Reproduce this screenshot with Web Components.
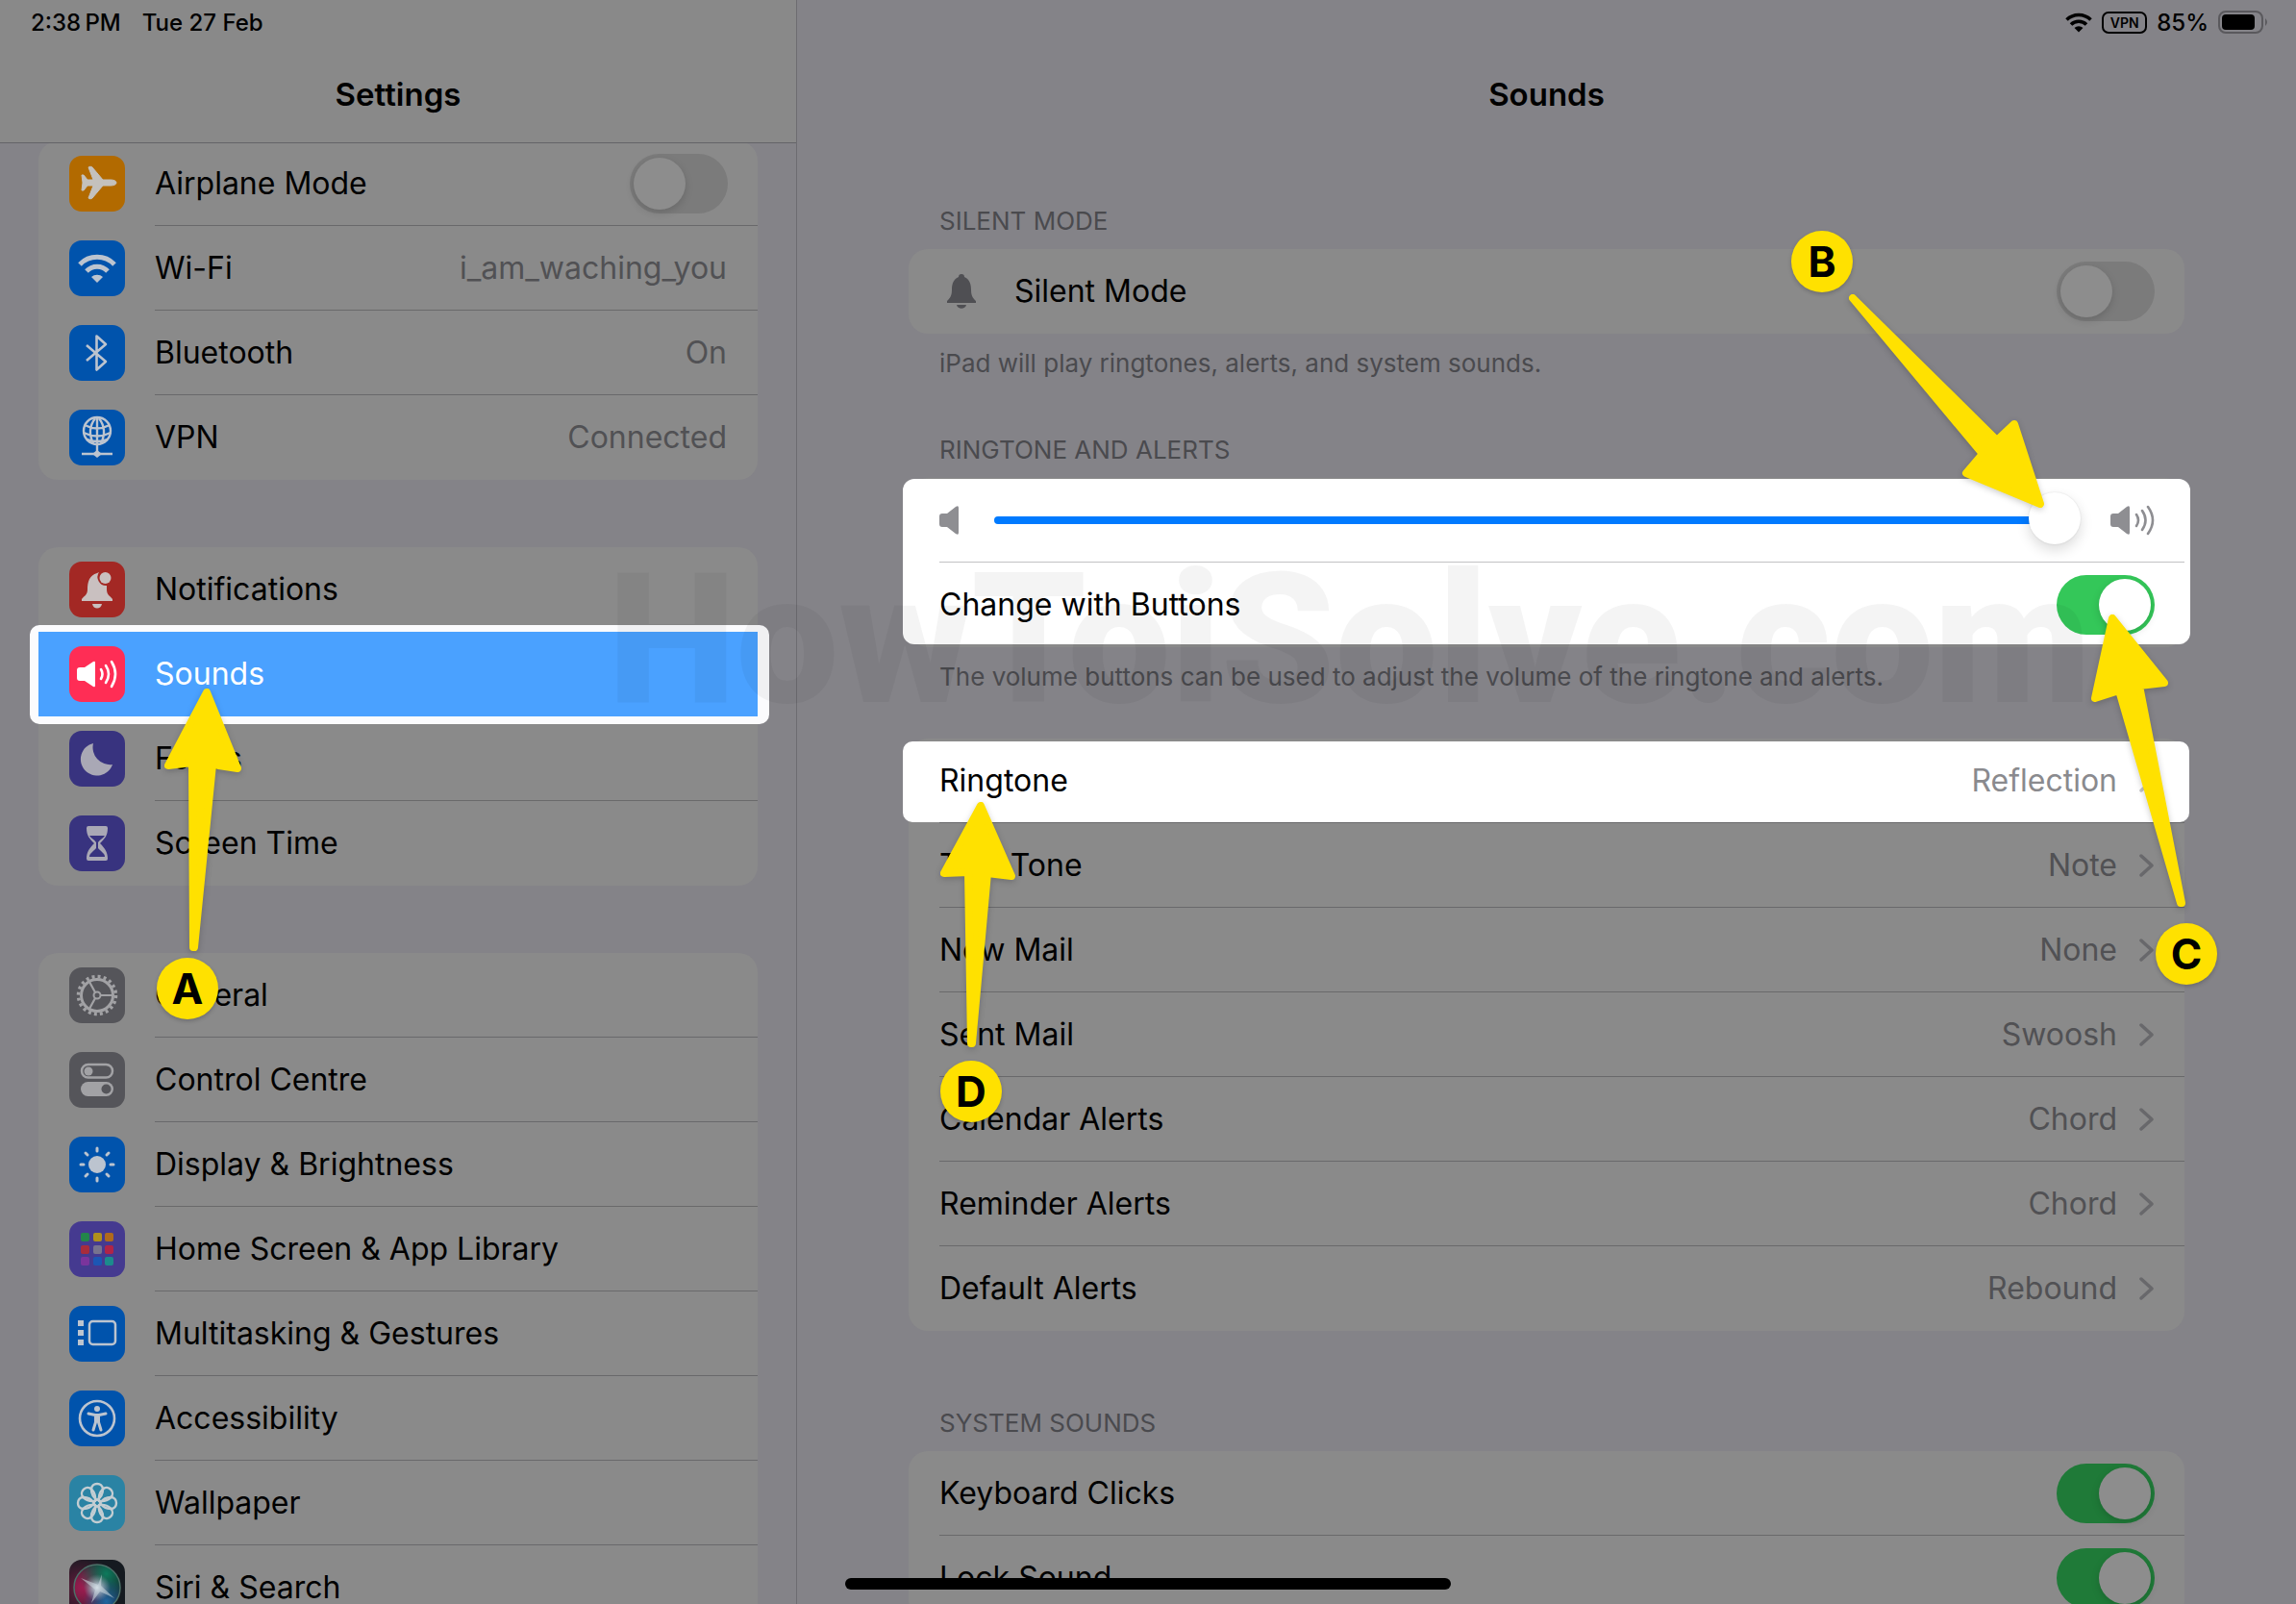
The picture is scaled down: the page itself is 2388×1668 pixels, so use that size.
<!DOCTYPE html>
<html lang="en">
<head>
<meta charset="utf-8">
<meta name="viewport" content="width=device-width, initial-scale=1">
<title>Sounds</title>
<style>
  html, body {
    margin: 0;
    height: 100%;
  }
  body {
    overflow: hidden;
    font-family: Inter, "Liberation Sans", sans-serif;
    font-size: 32px;
    color: #000;
    background: #848388;
  }
</style>
</head>
<body>
<settings-app>
  <settings-pane slot="sidebar" heading="Settings" sidebar>
    <status-time slot="status"></status-time>
    <settings-group>
      <settings-row icon="airplane" label="Airplane Mode" toggle="off"></settings-row>
      <settings-row icon="wifi" label="Wi-Fi" value="i_am_waching_you"></settings-row>
      <settings-row icon="bluetooth" label="Bluetooth" value="On"></settings-row>
      <settings-row icon="vpn" label="VPN" value="Connected"></settings-row>
    </settings-group>
    <settings-group>
      <settings-row icon="notifications" label="Notifications" plain></settings-row>
      <settings-row icon="sounds" label="Sounds" plain selected></settings-row>
      <settings-row icon="focus" label="Focus"></settings-row>
      <settings-row icon="screentime" label="Screen Time"></settings-row>
    </settings-group>
    <settings-group>
      <settings-row icon="general" label="General"></settings-row>
      <settings-row icon="control" label="Control Centre"></settings-row>
      <settings-row icon="display" label="Display &amp; Brightness"></settings-row>
      <settings-row icon="home" label="Home Screen &amp; App Library"></settings-row>
      <settings-row icon="multitask" label="Multitasking &amp; Gestures"></settings-row>
      <settings-row icon="accessibility" label="Accessibility"></settings-row>
      <settings-row icon="wallpaper" label="Wallpaper"></settings-row>
      <settings-row icon="siri" label="Siri &amp; Search"></settings-row>
    </settings-group>
  </settings-pane>

  <settings-pane slot="content" heading="Sounds">
    <status-icons slot="status"></status-icons>
    <settings-group heading="SILENT MODE" footer="iPad will play ringtones, alerts, and system sounds.">
      <settings-row icon="bell" label="Silent Mode" toggle="off"></settings-row>
    </settings-group>
    <settings-group heading="RINGTONE AND ALERTS" spotlight
      footer="The volume buttons can be used to adjust the volume of the ringtone and alerts.">
      <volume-row></volume-row>
      <settings-row label="Change with Buttons" toggle="on"></settings-row>
    </settings-group>
    <settings-group>
      <settings-row label="Ringtone" value="Reflection" chevron spotlight></settings-row>
      <settings-row label="Text Tone" value="Note" chevron></settings-row>
      <settings-row label="New Mail" value="None" chevron></settings-row>
      <settings-row label="Sent Mail" value="Swoosh" chevron></settings-row>
      <settings-row label="Calendar Alerts" value="Chord" chevron></settings-row>
      <settings-row label="Reminder Alerts" value="Chord" chevron></settings-row>
      <settings-row label="Default Alerts" value="Rebound" chevron></settings-row>
    </settings-group>
    <settings-group heading="SYSTEM SOUNDS">
      <settings-row label="Keyboard Clicks" toggle="on"></settings-row>
      <settings-row label="Lock Sound" toggle="on"></settings-row>
    </settings-group>
  </settings-pane>

  <callout-layer slot="overlay"></callout-layer>
</settings-app>

<script>
const ICONS = {
  airplane: ['#b26a00', '<path fill="#c4c1bd" stroke="#c4c1bd" stroke-linejoin="round" d="M49 28c0-2-3-3-6-3h-8L24 12c-1-1-3-1-4 0l5 13h-6l-4-5h-2l1 8-1 8h2l4-5h6l-5 13c1 1 3 1 4 0l11-13h8c3 0 6-1 6-3z"/>'],
  wifi: ['#0053ac', '<g fill="none" stroke="#bcc4cf" stroke-width="5"><path d="M11 25a25 25 0 0 1 36 0"/><path d="M18 32a15 15 0 0 1 22 0"/></g><path fill="#bcc4cf" d="M29 44l-6-6a9 9 0 0 1 12 0z"/>'],
  bluetooth: ['#0053ac', '<path fill="none" stroke="#bcc4cf" stroke-width="2.6" stroke-linejoin="round" d="M18 21l20 17-9.500 8.500v-35L38 20 18 37"/>'],
  vpn: ['#0053ac', '<g fill="none" stroke="#bcc4cf" stroke-width="2.400"><circle cx="29" cy="22" r="14"/><path d="M29 8v37M27 9q-9 12-2 26M31 9q9 12 2 26M16 16q13 7 26 0M15 24q14 7 28 0M18 31q11 4 22 0M13 46h32"/></g><path fill="#bcc4cf" d="M29 42l5 4-5 4-5-4z"/>'],
  notifications: ['#a32824', '<path fill="#c9c0c0" d="M29 12c-8 2-10 9-10 17 0 6-4 7-6 10v2h32v-2c-2-3-6-4-6-10v-4a9 9 0 0 1-8-14zM24 44h10c-1 6-9 6-10 0z"/><circle cx="37.500" cy="17" r="6" fill="#c9c0c0"/>'],
  sounds: ['#ff2d55', '<path fill="#fff" d="M8 25q0-3 3-3h5l9-6q2-1 2 1v24q0 2-2 1l-9-6h-5q-3 0-3-3z"/><g fill="none" stroke="#fff" stroke-width="2.600" stroke-linecap="round"><path d="M33 24q3 5 0 10M38 20q6 9 0 18M44 16q8 13 0 26"/></g>'],
  focus: ['#38337f', '<path fill="#a9a8b5" d="M25 13a17 17 0 1 0 20 22A18 18 0 0 1 25 13z"/>'],
  screentime: ['#38337f', '<path fill="#a9a8b5" fill-rule="evenodd" d="M20 11h18q2 0 2 2c0 8-3 11-8 16 5 5 8 9 8 16q0 2-2 2H20q-2 0-2-2c0-7 3-11 8-16-5-5-8-8-8-16q0-2 2-2zm1 10c2 3 5 4 7 7v6c-2 3-7 5-7 9h16c0-4-5-6-7-9v-6c2-3 5-4 7-7z"/>'],
  general: ['#55555a', '<g fill="none" stroke="#a2a2a5"><circle cx="29" cy="29" r="19.500" stroke-width="3.500" stroke-dasharray="3 3.126"/><circle cx="29" cy="29" r="16.500" stroke-width="3"/><circle cx="29" cy="29" r="3.500" stroke-width="2"/><path stroke-width="2.200" d="M33 29h12M27 26l-6-11M27 32l-6 11"/></g>'],
  control: ['#55555a', '<rect x="13" y="13" width="32" height="13.500" rx="6.700" fill="none" stroke="#a2a2a5" stroke-width="2.500"/><circle cx="20" cy="20" r="4.500" fill="#a2a2a5"/><rect x="12" y="31" width="34" height="15" rx="7.500" fill="#a2a2a5"/><circle cx="38.500" cy="38.500" r="5" fill="#55555a"/>'],
  display: ['#0053ac', '<circle cx="29" cy="29" r="9" fill="#bcc4cf"/><path stroke="#bcc4cf" stroke-width="3" stroke-linecap="round" d="M29 12v3M29 43v3M12 29h3M43 29h3M17 17l2 2M39 39l2 2M17 41l2-2M39 19l2-2"/>'],
  home: ['#453a90', '<g><rect x="12" y="12" width="9" height="9" rx="2" fill="#23854a"/><rect x="25" y="12" width="9" height="9" rx="2" fill="#b0901c"/><rect x="37" y="12" width="9" height="9" rx="2" fill="#b06a1c"/><rect x="12" y="25" width="9" height="9" rx="2" fill="#a82c3c"/><rect x="25" y="25" width="9" height="9" rx="2" fill="#77738e"/><rect x="37" y="25" width="9" height="9" rx="2" fill="#b02448"/><rect x="12" y="37" width="9" height="9" rx="2" fill="#7a349c"/><rect x="25" y="37" width="9" height="9" rx="2" fill="#1c56b4"/><rect x="37" y="37" width="9" height="9" rx="2" fill="#1c8a8c"/></g>'],
  multitask: ['#0053ac', '<rect x="21" y="16" width="27" height="24" rx="3.500" fill="none" stroke="#bcc4cf" stroke-width="2.500"/><path fill="#bcc4cf" d="M9 15h6v6H9zM9 25h6v6H9zM9 35h6v6H9z"/>'],
  accessibility: ['#0053ac', '<circle cx="29" cy="29" r="18" fill="none" stroke="#bcc4cf" stroke-width="2.600"/><circle cx="29" cy="19" r="3" fill="#bcc4cf"/><path fill="none" stroke="#bcc4cf" stroke-width="3" stroke-linecap="round" stroke-linejoin="round" d="M20 24l7 1.500h4l7-1.500M27.500 26v7L25 41M30.500 26v7L33 41"/>'],
  wallpaper: ['#2a83a4', '<g fill="none" stroke="#c3cdd2" stroke-width="2.400">' +
    [0, 45, 90, 135, 180, 225, 270, 315].map(a => `<path transform="rotate(${a} 29 29)" d="M29 26c-4-3-6-7-6-11 0-8 12-8 12 0 0 4-2 8-6 11z"/>`).join('') + '</g>'],
  siri: ['#151a20', '<defs><radialGradient id="r" cx=".2" cy=".5" r=".6"><stop stop-color="#9c1c50"/><stop offset="1" stop-color="#9c1c50" stop-opacity="0"/></radialGradient><radialGradient id="g" cx=".7" cy=".2" r=".6"><stop stop-color="#0d7a5c"/><stop offset="1" stop-color="#0d7a5c" stop-opacity="0"/></radialGradient><radialGradient id="b" cx=".7" cy=".8" r=".5"><stop stop-color="#2166a0"/><stop offset="1" stop-color="#2166a0" stop-opacity="0"/></radialGradient><radialGradient id="w"><stop stop-color="#dfe8ee"/><stop offset="1" stop-color="#9ab" stop-opacity="0"/></radialGradient></defs><rect width="58" height="58" fill="url(#r)" opacity=".6"/><circle cx="29" cy="29" r="24" fill="url(#r)"/><circle cx="29" cy="29" r="24" fill="url(#g)"/><circle cx="29" cy="29" r="24" fill="url(#b)"/><circle cx="29" cy="29" r="24" fill="none" stroke="#4c7068" stroke-width="1.500"/><circle cx="29" cy="29" r="14" fill="url(#w)"/><path fill="#cdd9e0" fill-opacity=".55" d="M12 19l18 7 4-11-1 12 14 13-15-7-9 12 4-14z"/>'],
  bell: ['none', '<path fill="#4f4f53" d="M18 11c-2 0-3 1-3 3-5 2-7 7-7 13 0 7-2 9-5 12v2h30v-2c-3-3-5-5-5-12 0-6-2-11-7-13 0-2-1-3-3-3zM13 43h10c-1 5-9 5-10 0z"/>']
};

/** Shell with the two panes, the overlay and the home indicator. */
class SettingsApp extends HTMLElement {
  constructor() {
    super();
    this.attachShadow({ mode: 'open' }).innerHTML = `
      <style>
        :host {
          position: relative;
          display: grid;
          grid-template-columns: 829px minmax(0, 1fr);
          height: 100vh;
          overflow: hidden;
        }
        .home {
          position: absolute;
          left: 50%;
          bottom: 15px;
          width: 630px;
          height: 12px;
          margin-left: -315px;
          border-radius: 6px;
          background: #000;
        }
      </style>
      <slot name="sidebar"></slot>
      <slot name="content"></slot>
      <div class="home"></div>
      <slot name="overlay"></slot>
    `;
  }
}

class SettingsPane extends HTMLElement {
  constructor() {
    super();
    this.attachShadow({ mode: 'open' }).innerHTML = `
      <style>
        :host {
          display: flex;
          flex-direction: column;
          min-width: 0;
          height: 100vh;
          overflow: hidden;
          box-sizing: border-box;
        }
        :host([sidebar]) { border-right: 1px solid #6d6c71; }
        header {
          flex: none;
          box-sizing: border-box;
          height: 149px;
          position: relative;
          z-index: 1;
        }
        :host([sidebar]) header {
          background: #898989;
          border-bottom: 1px solid #646468;
        }
        .status {
          display: flex;
          align-items: center;
          height: 46px;
          padding: 0 28px 0 32px;
        }
        h1 {
          margin: 0;
          font-size: 33px;
          font-weight: 600;
          line-height: 104px;
          text-align: center;
        }
        main {
          display: flex;
          flex-direction: column;
          padding: 65px 116px 0;
        }
        :host([sidebar]) main {
          margin-top: -2px;
          padding: 0 40px;
          gap: 70px;
        }
      </style>
      <header>
        <div class="status"><slot name="status"></slot></div>
        <h1></h1>
      </header>
      <main><slot></slot></main>
    `;
  }

  connectedCallback() {
    this.shadowRoot.querySelector('h1').textContent = this.getAttribute('heading');
  }
}

class StatusTime extends HTMLElement {
  constructor() {
    super();
    this.attachShadow({ mode: 'open' }).innerHTML = `
      <style>
        :host { display: flex; gap: 22px; font-size: 24px; font-weight: 500; }
      </style>
      <span>2:38&thinsp;PM</span><span>Tue 27 Feb</span>
    `;
  }
}

class StatusIcons extends HTMLElement {
  constructor() {
    super();
    this.attachShadow({ mode: 'open' }).innerHTML = `
      <style>
        :host {
          display: flex;
          align-items: center;
          gap: 10px;
          margin-left: auto;
          font-size: 24px;
          font-weight: 500;
        }
        .vpn {
          box-sizing: border-box;
          width: 47px;
          height: 23px;
          border: 2px solid #000;
          border-radius: 7px;
          font-size: 14px;
          font-weight: 600;
          line-height: 19px;
          text-align: center;
        }
      </style>
      <svg width="28" height="21" viewBox="0 0 28 21"><g fill="none" stroke="#000" stroke-width="3.600"><path d="M1.500 7.500a18 18 0 0 1 25 0"/><path d="M6 12.500a11.500 11.500 0 0 1 16 0"/></g><path d="M14 20.500l-4.500-4.500a6.500 6.500 0 0 1 9 0z"/></svg>
      <span class="vpn">VPN</span>
      <span>85%</span>
      <svg width="53" height="24" viewBox="0 0 53 24"><rect x="1" y="1" width="45" height="22" rx="7" fill="none" stroke="#5a595d" stroke-width="2"/><rect x="4" y="4" width="34" height="16" rx="4"/><path fill="#5a595d" d="M49 8q4 4 0 8z"/></svg>
    `;
  }
}

/** Rounded card of rows, with optional heading and footer lines. */
class SettingsGroup extends HTMLElement {
  constructor() {
    super();
    this.attachShadow({ mode: 'open' }).innerHTML = `
      <style>
        :host { display: block; }
        h2, p {
          margin: 0;
          padding: 0 32px 13px;
          font-size: 26px;
          font-weight: 400;
          line-height: 32px;
          color: #4a4a4e;
        }
        p { padding: 15px 32px 48px; }
        :host([spotlight]) h2 { padding-top: 10px; }
        :host(:last-of-type) h2 { padding-top: 80px; }
        .card {
          position: relative;
          z-index: 0;
          border-radius: 20px;
          background: #8a8a8a;
        }
        :host([spotlight]) .card::before {
          content: "";
          position: absolute;
          z-index: -1;
          inset: 1px -6px 3px;
          border-radius: 12px;
          background: #fff;
        }
        :host([spotlight]) .card { --divider: #c2c2c4; }
        ::slotted(:last-child) { --divider: transparent; }
      </style>
      <h2></h2>
      <div class="card"><slot></slot></div>
      <p></p>
    `;
  }

  connectedCallback() {
    this._fill('h2', this.getAttribute('heading'));
    this._fill('p', this.getAttribute('footer'));
  }

  _fill(selector, text) {
    const el = this.shadowRoot.querySelector(selector);
    if (text) el.textContent = text;
    else el.remove();
  }
}

/** iOS style switch around a real checkbox. */
const SWITCH_CSS = `
  input[type=checkbox] {
    appearance: none;
    position: relative;
    flex: none;
    width: 102px;
    height: 62px;
    margin: 0 31px 0 0;
    border-radius: 31px;
    background: var(--track, #7b7b7b);
  }
  input[type=checkbox]::before {
    content: "";
    position: absolute;
    top: 4px;
    left: 4px;
    width: 54px;
    height: 54px;
    border-radius: 50%;
    background: var(--thumb, #8d8d8d);
    box-shadow: 0 3px 8px rgba(0, 0, 0, .15);
  }
  input[type=checkbox]:checked { background: var(--track-on, #1f7a38); }
  input[type=checkbox]:checked::before { left: 44px; }
`;

class SettingsRow extends HTMLElement {
  connectedCallback() {
    const icon = ICONS[this.getAttribute('icon')];
    const toggle = this.getAttribute('toggle');
    const value = this.getAttribute('value');
    const tag = toggle ? 'label' : 'button';

    this.attachShadow({ mode: 'open' }).innerHTML = `
      <style>
        :host {
          display: block;
          position: relative;
          z-index: 0;
        }
        .row {
          display: flex;
          align-items: stretch;
          width: 100%;
          height: 88px;
          margin: 0;
          padding: 0 0 0 32px;
          border: 0;
          background: none;
          font: inherit;
          color: inherit;
          text-align: left;
          box-sizing: border-box;
        }
        .icon {
          flex: none;
          align-self: center;
          width: 58px;
          height: 58px;
          margin-right: 31px;
          border-radius: 13px;
          overflow: hidden;
        }
        .icon svg { display: block; }
        :host([icon=bell]) .icon { width: 46px; margin-right: 32px; }
        .body {
          flex: 1;
          display: flex;
          align-items: center;
          min-width: 0;
          border-bottom: 1px solid var(--divider, #69696b);
        }
        :host([plain]) .body { border-color: transparent; }
        .label { flex: 1; }
        .value {
          margin-right: 32px;
          color: #515154;
        }
        :host([chevron]) .value { margin-right: 22px; }
        .chevron { margin-right: 32px; color: #68686b; }
        :host([selected]) { color: #fff; z-index: 1; }
        :host([selected])::before,
        :host([spotlight])::before {
          content: "";
          position: absolute;
          z-index: -1;
          border-radius: 10px;
        }
        :host([selected])::before {
          inset: -7px -12px -8px -9px;
          background: linear-gradient(#4aa1ff, #4aa1ff) 9px 7px / calc(100% - 21px) calc(100% - 15px) no-repeat #fbfbfd;
        }
        :host([spotlight])::before { inset: 3px -5px 1px -6px; background: #fff; }
        :host([spotlight]) .value { color: #8a8a8e; }
        :host([spotlight]) .chevron { color: #c4c4c6; }
        ${SWITCH_CSS}
      </style>
      <${tag} class="row">
        ${icon ? `<span class="icon" style="background:${icon[0]}"><svg width="58" height="58" viewBox="${this.getAttribute('icon') === 'bell' ? '-5' : '0'} 0 58 58">${icon[1]}</svg></span>` : ''}
        <span class="body">
          <span class="label"></span>
          ${value ? '<span class="value"></span>' : ''}
          ${this.hasAttribute('chevron') ? '<svg class="chevron" width="16" height="26" viewBox="0 0 16 26"><path fill="none" stroke="currentColor" stroke-width="3.500" stroke-linecap="round" stroke-linejoin="round" d="M3 3l11 10L3 23"/></svg>' : ''}
          ${toggle ? `<input type="checkbox" role="switch" ${toggle === 'on' ? 'checked' : ''}>` : ''}
        </span>
      </${tag}>
    `;
    this.shadowRoot.querySelector('.label').textContent = this.getAttribute('label');
    if (value) this.shadowRoot.querySelector('.value').textContent = value;

    // rows inside a lit card use full-brightness switch colours
    if (this.closest('settings-group[spotlight]')) {
      this.style.setProperty('--track-on', '#34c759');
      this.style.setProperty('--thumb', '#fff');
    }
  }
}

class VolumeRow extends HTMLElement {
  constructor() {
    super();
    this.attachShadow({ mode: 'open' }).innerHTML = `
      <style>
        :host { display: block; padding-left: 32px; }
        .row {
          display: flex;
          align-items: center;
          height: 87px;
          padding-right: 31px;
          border-bottom: 1px solid var(--divider, #c2c2c4);
        }
        svg { flex: none; fill: #8e8e92; }
        input {
          appearance: none;
          flex: 1;
          min-width: 0;
          height: 56px;
          margin: 0 31px 0 36px;
          background: none;
        }
        input::-webkit-slider-runnable-track {
          height: 8px;
          border-radius: 4px;
          background: linear-gradient(#007aff, #007aff) 0 0 / calc(100% - 27px) 100% no-repeat;
        }
        input::-webkit-slider-thumb {
          appearance: none;
          width: 54px;
          height: 54px;
          margin-top: -25px;
          border-radius: 50%;
          background: #fff;
          box-shadow: 0 6px 14px rgba(0, 0, 0, .14), 0 0 2px rgba(0, 0, 0, .12);
        }
      </style>
      <div class="row">
        <svg width="21" height="32" viewBox="0 0 21 32"><path d="M0 12q0-3 3-3h5l9-7q3-2 3 1v26q0 3-3 1l-9-7H3q-3 0-3-3z"/></svg>
        <input type="range" min="0" max="100" value="100" aria-label="Volume">
        <svg width="46" height="32" viewBox="0 0 46 32"><path d="M0 12q0-3 3-3h5l9-7q3-2 3 1v26q0 3-3 1l-9-7H3q-3 0-3-3z"/><path fill="none" stroke="#8e8e92" stroke-width="2.600" stroke-linecap="round" d="M27 10q4 6 0 12M33 6q7 10 0 20M39 2q10 14 0 28"/></svg>
      </div>
    `;
  }
}

/** Watermark, arrows and lettered badges that float over the screen. */
class CalloutLayer extends HTMLElement {
  constructor() {
    super();
    this.attachShadow({ mode: 'open' }).innerHTML = `
      <style>
        :host {
          position: absolute;
          inset: 0;
          z-index: 5;
          pointer-events: none;
        }
        .mark {
          position: absolute;
          top: 545px;
          left: 632px;
          font: 900 190px/240px Roboto, sans-serif;
          white-space: nowrap;
          color: rgba(0, 0, 0, .045);
        }
        svg {
          position: absolute;
          overflow: visible;
          fill: #ffe100;
          stroke: #ffe100;
          stroke-width: 8;
          stroke-linejoin: round;
          filter: drop-shadow(0 2px 3px rgba(0, 0, 0, .2));
        }
        b {
          position: absolute;
          width: 64px;
          height: 64px;
          border-radius: 50%;
          background: #ffe100;
          box-shadow: 0 2px 4px rgba(0, 0, 0, .2);
          font-size: 44px;
          font-weight: 700;
          line-height: 64px;
          text-align: center;
        }
      </style>
      <div class="mark">HowToiSolve.com</div>

      <svg style="left:170px;top:715px" width="82" height="275"><path d="M45 5L5 81l25-3 1 192h1L51 80l26 4z"/></svg>
      <b style="left:163px;top:996px">A</b>

      <svg style="right:260px;top:304px" width="206" height="226"><path d="M5 6l135 162-17 20 77 32-27-83-18 17z"/></svg>
      <b style="right:461px;top:240px">B</b>

      <svg style="right:132px;top:638px" width="82" height="306"><path d="M23 5L5 88l25-8 64 221h1L51 75l26-3z"/></svg>
      <b style="right:82px;top:960px">C</b>

      <svg style="left:977px;top:833px" width="80" height="258"><path d="M43 5L5 75l25-1 3 178h1L50 75l25 3z"/></svg>
      <b style="left:978px;top:1103px">D</b>
    `;
  }
}

customElements.define('settings-app', SettingsApp);
customElements.define('settings-pane', SettingsPane);
customElements.define('status-time', StatusTime);
customElements.define('status-icons', StatusIcons);
customElements.define('settings-group', SettingsGroup);
customElements.define('settings-row', SettingsRow);
customElements.define('volume-row', VolumeRow);
customElements.define('callout-layer', CalloutLayer);
</script>
</body>
</html>
